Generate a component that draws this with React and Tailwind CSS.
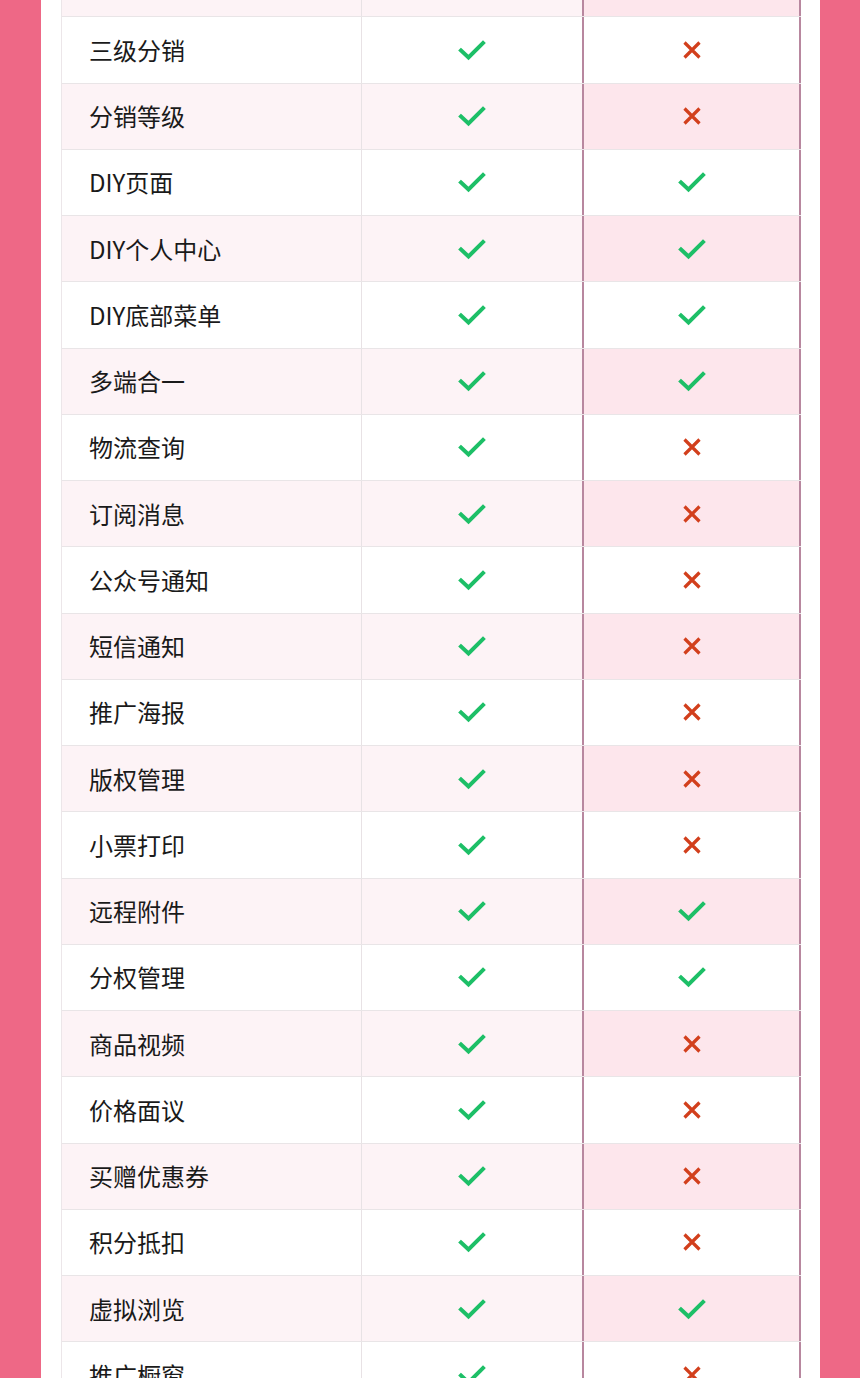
import React from 'react';

// [label, standard, lite]
const ROWS = [
    ['', true, false],
    ['三级分销', true, false],
    ['分销等级', true, false],
    ['DIY页面', true, true],
    ['DIY个人中心', true, true],
    ['DIY底部菜单', true, true],
    ['多端合一', true, true],
    ['物流查询', true, false],
    ['订阅消息', true, false],
    ['公众号通知', true, false],
    ['短信通知', true, false],
    ['推广海报', true, false],
    ['版权管理', true, false],
    ['小票打印', true, false],
    ['远程附件', true, true],
    ['分权管理', true, true],
    ['商品视频', true, false],
    ['价格面议', true, false],
    ['买赠优惠券', true, false],
    ['积分抵扣', true, false],
    ['虚拟浏览', true, true],
    ['推广橱窗', true, false],
];

const Check = () => (
    <svg width="28" height="22" viewBox="0 0 28 22" fill="none">
        <path d="M3 11.5 L10.5 18.5 L25 4" stroke="#1dbf67" strokeWidth="4" strokeLinecap="square" strokeLinejoin="miter" />
    </svg>
);

const Cross = () => (
    <svg width="20" height="20" viewBox="0 0 20 20" fill="none">
        <path d="M2.5 2.5 L17.5 17.5 M17.5 2.5 L2.5 17.5" stroke="#d23f1c" strokeWidth="3.2" strokeLinecap="butt" />
    </svg>
);

const Row = ({ label, std, lite, pink }) => (
    <div className={`flex h-[66.25px] border-b border-[#e9e5e7] ${pink ? 'bg-[#fdf3f6]' : 'bg-white'}`}>
        <div className="w-[300px] flex items-center pl-[27px] border-r border-[#e8e2e5] text-[24px] text-[#1a1a1a]">
            {label}
        </div>
        <div className="w-[220px] flex items-center justify-center">
            {std ? <Check /> : <Cross />}
        </div>
        <div className={`w-[219px] flex items-center justify-center border-x-2 border-[#b8879f] ${pink ? 'bg-[#fde6ec]' : 'bg-white'}`}>
            {lite ? <Check /> : <Cross />}
        </div>
    </div>
);

export default function App() {
    return (
        <div
            className="h-[1378px] overflow-hidden bg-[#ee6886] pl-[41px] pr-[40px]"
            style={{ fontFamily: '"Noto Sans CJK SC", "Noto Sans", sans-serif' }}
        >
            <div className="h-full bg-white px-[20px] overflow-hidden">
                <div className="mt-[-49px] border-l border-[#ece6e9] w-[740px]">
                    {ROWS.map(([label, std, lite], i) => (
                        <Row key={i} label={label} std={std} lite={lite} pink={i % 2 === 0} />
                    ))}
                </div>
            </div>
        </div>
    );
}
